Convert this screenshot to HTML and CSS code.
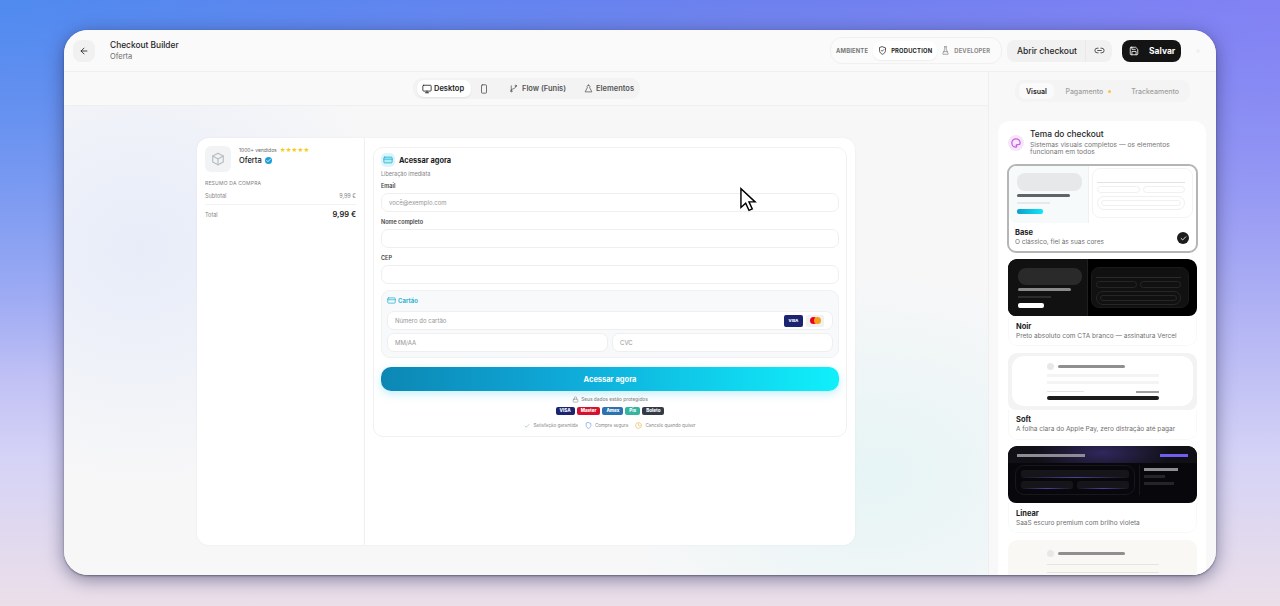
FILE: index.html
```html
<!DOCTYPE html>
<html lang="pt-BR">
<head>
    <meta charset="UTF-8">
    <meta name="viewport" content="width=device-width, initial-scale=1.0">
    <title>Checkout Builder</title>
    <link rel="stylesheet" href="styles.css">
</head>
<body>
    <div class="window">
        <header class="topbar">
            <div class="topbar-left">
                <button class="back-btn">
                    <svg width="10" height="10" viewBox="0 0 24 24" class="ico"><path d="M19 12H5M12 19l-7-7 7-7"/></svg>
                </button>
                <div class="title-block">
                    <div class="app-title">Checkout Builder</div>
                    <div class="app-sub">Oferta</div>
                </div>
            </div>
            <div class="topbar-right">
                <div class="env-switch">
                    <span class="env-label">AMBIENTE</span>
                    <span class="env-opt env-active">
                        <svg width="9" height="9" viewBox="0 0 24 24" class="ico"><path d="M12 2l8 3v7c0 5-3.500 8-8 10-4.500-2-8-5-8-10V5z"/><path d="M9 12l2 2 4-4"/></svg>
                        PRODUCTION
                    </span>
                    <span class="env-opt env-dev">
                        <svg width="9" height="9" viewBox="0 0 24 24" class="ico"><path d="M9 2h6M10 2v7l-5 11a1 1 0 0 0 1 2h12a1 1 0 0 0 1-2L14 9V2M7 15h10"/></svg>
                        DEVELOPER
                    </span>
                </div>
                <div class="open-group">
                    <span class="open-main">Abrir checkout</span>
                    <span class="open-link">
                        <svg width="11" height="11" viewBox="0 0 24 24" class="ico"><path d="M9 17H7A5 5 0 0 1 7 7h2M15 7h2a5 5 0 0 1 0 10h-2M8 12h8"/></svg>
                    </span>
                </div>
                <button class="save-btn">
                    <svg width="10" height="10" viewBox="0 0 24 24" class="ico"><path d="M5 3h11l5 5v11a2 2 0 0 1-2 2H5a2 2 0 0 1-2-2V5a2 2 0 0 1 2-2z"/><path d="M7 3v5h8M7 21v-8h10v8"/></svg>
                    Salvar
                </button>
                <span class="faint-dot"></span>
            </div>
        </header>

        <div class="workspace">
            <main class="stage">
                <div class="toolbar">
                    <div class="view-tabs">
                        <span class="view-tab view-active">
                            <svg width="10" height="10" viewBox="0 0 24 24" class="ico"><rect x="2" y="3" width="20" height="14" rx="2"/><path d="M8 21h8M12 17v4"/></svg>
                            Desktop
                        </span>
                        <span class="view-tab view-icon">
                            <svg width="10" height="10" viewBox="0 0 24 24" class="ico"><rect x="6" y="2" width="12" height="20" rx="2"/></svg>
                        </span>
                        <span class="view-tab view-flow">
                            <svg width="9" height="9" viewBox="0 0 24 24" class="ico"><circle cx="6" cy="19" r="2"/><circle cx="18" cy="5" r="2"/><path d="M6 17V5M18 7c0 5-6 5-12 8"/></svg>
                            Flow (Funis)
                        </span>
                        <span class="view-tab view-last">
                            <svg width="9" height="9" viewBox="0 0 24 24" class="ico"><path d="M12 3a4 4 0 0 1 3 6.500L21 21H3l6-11.500A4 4 0 0 1 12 3z"/></svg>
                            Elementos
                        </span>
                    </div>
                </div>

                <div class="canvas">
                    <div class="preview">
                        <aside class="summary">
                            <div class="product">
                                <div class="product-thumb">
                                    <svg width="14" height="14" viewBox="0 0 24 24" class="ico"><path d="M12 2l9 5v10l-9 5-9-5V7z"/><path d="M3 7l9 5 9-5M12 12v10"/></svg>
                                </div>
                                <div class="product-info">
                                    <div class="sold-row"><span>1000+ vendidos</span><span class="stars">★★★★★</span></div>
                                    <div class="product-name">Oferta <span class="verified"><svg width="7" height="7" viewBox="0 0 24 24" class="ico ico-white"><path d="M6 12l4 4 8-8"/></svg></span></div>
                                </div>
                            </div>
                            <div class="summary-head">RESUMO DA COMPRA</div>
                            <div class="summary-row summary-sub"><span>Subtotal</span><span>9,99 €</span></div>
                            <div class="summary-row summary-total"><span>Total</span><strong>9,99 €</strong></div>
                        </aside>
                        <section class="form-col">
                            <div class="form-card">
                                <div class="form-title-row">
                                    <span class="form-icon">
                                        <svg width="10" height="10" viewBox="0 0 24 24" class="ico ico-cyan"><rect x="2" y="5" width="20" height="14" rx="2"/><path d="M2 10h20"/></svg>
                                    </span>
                                    <span class="form-title">Acessar agora</span>
                                </div>
                                <div class="form-sub">Liberação imediata</div>

                                <label class="field-label">Email</label>
                                <div class="input">você@exemplo.com</div>
                                <label class="field-label">Nome completo</label>
                                <div class="input"></div>
                                <label class="field-label">CEP</label>
                                <div class="input"></div>

                                <div class="card-box">
                                    <div class="card-head">
                                        <svg width="9" height="9" viewBox="0 0 24 24" class="ico ico-cyan"><rect x="2" y="5" width="20" height="14" rx="2"/><path d="M2 10h20"/></svg>
                                        Cartão
                                    </div>
                                    <div class="input input-card">
                                        <span>Número do cartão</span>
                                        <span class="card-brands">
                                            <span class="brand-visa">VISA</span>
                                            <span class="brand-master"><i class="mc-red"></i><i class="mc-orange"></i></span>
                                        </span>
                                    </div>
                                    <div class="card-split">
                                        <div class="input">MM/AA</div>
                                        <div class="input">CVC</div>
                                    </div>
                                </div>

                                <button class="cta">Acessar agora</button>

                                <div class="secure-note">
                                    <svg width="7" height="7" viewBox="0 0 24 24" class="ico"><rect x="4" y="11" width="16" height="10" rx="2"/><path d="M8 11V7a4 4 0 0 1 8 0v4"/></svg>
                                    Seus dados estão protegidos
                                </div>
                                <div class="pay-badges">
                                    <span class="pay pay-visa">VISA</span>
                                    <span class="pay pay-master">Master</span>
                                    <span class="pay pay-amex">Amex</span>
                                    <span class="pay pay-pix">Pix</span>
                                    <span class="pay pay-boleto">Boleto</span>
                                </div>
                                <div class="trust-row">
                                    <span><svg width="6" height="6" viewBox="0 0 24 24" class="ico ico-green"><path d="M4 12l5 5L20 6"/></svg>Satisfação garantida</span>
                                    <span><svg width="7" height="7" viewBox="0 0 24 24" class="ico ico-blue"><path d="M12 2l8 3v7c0 5-3.500 8-8 10-4.500-2-8-5-8-10V5z"/></svg>Compra segura</span>
                                    <span><svg width="7" height="7" viewBox="0 0 24 24" class="ico ico-amber"><circle cx="12" cy="12" r="10"/><path d="M12 6v6l4 2"/></svg>Cancele quando quiser</span>
                                </div>
                            </div>
                        </section>
                    </div>
                </div>
            </main>

            <aside class="sidebar">
                <div class="side-tabs-wrap">
                    <div class="side-tabs">
                        <span class="side-tab side-active">Visual</span>
                        <span class="side-tab side-pay">Pagamento <i class="side-dot"></i></span>
                        <span class="side-tab">Trackeamento</span>
                    </div>
                </div>
                <div class="theme-panel">
                    <div class="theme-head">
                        <span class="theme-icon">
                            <svg width="10" height="10" viewBox="0 0 24 24" class="ico ico-pink"><path d="M12 2a10 10 0 1 0 0 20c2 0 2-2 1-3s0-3 2-3h3c2 0 4-1 4-4 0-6-5-10-10-10z"/></svg>
                        </span>
                        <div>
                            <div class="theme-title">Tema do checkout</div>
                            <div class="theme-desc">Sistemas visuais completos — os elementos funcionam em todos</div>
                        </div>
                    </div>

                    <div class="theme-card theme-selected">
                        <div class="thumb thumb-base">
                            <div class="tb-left">
                                <div class="tb-block"></div>
                                <div class="tb-bar"></div>
                                <div class="tb-faint"></div>
                                <div class="tb-btn"></div>
                            </div>
                            <div class="tb-right">
                                <div class="tb-panel">
                                    <div class="tb-line"></div>
                                    <div class="tb-pair"><span></span><span></span></div>
                                    <div class="tb-box"><span></span></div>
                                </div>
                            </div>
                        </div>
                        <div class="theme-info">
                            <div class="theme-name">Base</div>
                            <div class="theme-text">O clássico, fiel às suas cores</div>
                            <span class="theme-check"><svg width="7" height="7" viewBox="0 0 24 24" class="ico ico-white"><path d="M4 12l5 5L20 6"/></svg></span>
                        </div>
                    </div>

                    <div class="theme-card">
                        <div class="thumb thumb-base thumb-noir">
                            <div class="tb-left">
                                <div class="tb-block"></div>
                                <div class="tb-bar"></div>
                                <div class="tb-faint"></div>
                                <div class="tb-btn"></div>
                            </div>
                            <div class="tb-right">
                                <div class="tb-panel">
                                    <div class="tb-line"></div>
                                    <div class="tb-pair"><span></span><span></span></div>
                                    <div class="tb-box"><span></span></div>
                                </div>
                            </div>
                        </div>
                        <div class="theme-info">
                            <div class="theme-name">Noir</div>
                            <div class="theme-text">Preto absoluto com CTA branco — assinatura Vercel</div>
                        </div>
                    </div>

                    <div class="theme-card">
                        <div class="thumb thumb-soft">
                            <div class="soft-sheet">
                                <div class="soft-head"><i></i><span></span></div>
                                <div class="soft-line"></div>
                                <div class="soft-line"></div>
                                <div class="soft-foot"><span></span><span></span></div>
                                <div class="soft-cta"></div>
                            </div>
                        </div>
                        <div class="theme-info">
                            <div class="theme-name">Soft</div>
                            <div class="theme-text">A folha clara do Apple Pay, zero distração até pagar</div>
                        </div>
                    </div>

                    <div class="theme-card">
                        <div class="thumb thumb-linear">
                            <div class="lin-top"><span></span><span></span></div>
                            <div class="lin-body">
                                <div class="lin-form">
                                    <div class="lin-input"></div>
                                    <div class="lin-pair"><span></span><span></span></div>
                                </div>
                                <div class="lin-side"><span></span><span></span><span></span></div>
                            </div>
                        </div>
                        <div class="theme-info">
                            <div class="theme-name">Linear</div>
                            <div class="theme-text">SaaS escuro premium com brilho violeta</div>
                        </div>
                    </div>

                    <div class="theme-card">
                        <div class="thumb thumb-soft thumb-warm">
                            <div class="soft-sheet">
                                <div class="soft-head"><i></i><span></span></div>
                                <div class="soft-line"></div>
                                <div class="soft-line"></div>
                            </div>
                        </div>
                    </div>
                </div>
            </aside>
        </div>

        <svg class="cursor" width="17" height="25" viewBox="0 0 18 25">
            <path d="M1 1v20l5-4.500 3.500 7.500 3.500-1.500-3.500-7.500H16z"/>
        </svg>
    </div>
</body>
</html>
```

FILE: styles.css
```css
* {
    box-sizing: border-box;
}

body {
    margin: 0;
    height: 606px;
    padding: 30px 64px 31px;
    overflow: hidden;
    font-family: "Inter", "Liberation Sans", sans-serif;
    color: #171717;
    background:
        radial-gradient(ellipse 760px 380px at 0% 0%, rgba(60, 145, 240, .6), transparent),
        radial-gradient(ellipse 500px 300px at 100% 0%, rgba(150, 130, 250, .5), transparent),
        linear-gradient(180deg, #6d80ee 0%, #aeb0f4 50%, #d4d2f6 75%, #ebdfe9 100%);
}

button {
    font-family: inherit;
    border: none;
}

.ico {
    fill: none;
    stroke: currentColor;
    stroke-width: 2;
    stroke-linecap: round;
    stroke-linejoin: round;
    flex-shrink: 0;
}

.ico-white { color: #fff; stroke-width: 3; }
.ico-cyan { color: #22b3d6; }
.ico-pink { color: #c65fe0; stroke-width: 3; }
.ico-green { color: #4fb58a; }
.ico-blue { color: #5a8fd0; }
.ico-amber { color: #e5b44a; }

.window {
    position: relative;
    width: 1152px;
    height: 545px;
    border-radius: 24px;
    overflow: hidden;
    background: #f7f7f7;
    box-shadow: 0 1px 2px rgba(40, 40, 70, .5), 0 4px 18px rgba(30, 30, 70, .5);
    display: flex;
    flex-direction: column;
}

/* top bar */
.topbar {
    height: 42px;
    flex-shrink: 0;
    display: flex;
    justify-content: space-between;
    align-items: center;
    padding: 0 13px 0 9px;
    background: #fafafa;
    border-bottom: 1px solid #efefef;
}

.topbar-left {
    display: flex;
    align-items: center;
    gap: 15px;
}

.back-btn {
    width: 22px;
    height: 22px;
    padding: 0;
    border-radius: 8px;
    background: #f1f1f1;
    color: #222;
    display: flex;
    align-items: center;
    justify-content: center;
}

.app-title {
    font-size: 8.400px;
    font-weight: 500;
    color: #262626;
    line-height: 12px;
}

.app-sub {
    font-size: 7.500px;
    color: #6b6b6b;
    line-height: 11px;
}

.topbar-right {
    display: flex;
    align-items: center;
}

.env-switch {
    width: 172px;
    height: 27px;
    display: flex;
    align-items: center;
    padding: 0 5px;
    border-radius: 12px;
    background: #fbfbfb;
    border: 1px solid #f0f0f0;
    margin-right: 5px;
}

.env-label {
    font-size: 5.800px;
    font-weight: 700;
    letter-spacing: .2px;
    color: #777;
    margin-right: 5px;
}

.env-opt {
    display: flex;
    align-items: center;
    gap: 4px;
    height: 19px;
    padding: 0 5px;
    font-size: 5.800px;
    font-weight: 700;
    letter-spacing: .2px;
    color: #8a8a8a;
    border-radius: 8px;
}

.env-dev {
    padding-left: 4px;
}

.env-active {
    background: #fff;
    color: #222;
    box-shadow: 0 1px 2px rgba(0, 0, 0, .06);
}

.open-group {
    display: flex;
    width: 105px;
    height: 22px;
    border-radius: 8px;
    background: #f1f1f1;
    margin-right: 10px;
    overflow: hidden;
}

.open-main {
    flex: 1;
    padding-left: 2px;
    font-size: 8.500px;
    font-weight: 500;
    line-height: 22px;
    text-align: center;
    color: #262626;
    border-right: 1px solid #e9e9e9;
}

.open-link {
    width: 26px;
    display: flex;
    align-items: center;
    justify-content: center;
    color: #444;
}

.save-btn {
    width: 59px;
    height: 22px;
    display: flex;
    align-items: center;
    gap: 10px;
    padding: 0 7px;
    border-radius: 8px;
    background: #141414;
    color: #fff;
    font-size: 8.500px;
    font-weight: 700;
}

.faint-dot {
    width: 4px;
    height: 4px;
    border-radius: 50%;
    background: #f1f1f1;
    margin: 0 3px 0 15px;
}

/* work area */
.workspace {
    flex: 1;
    min-height: 0;
    display: flex;
}

.stage {
    width: 924px;
    display: flex;
    flex-direction: column;
    background:
        radial-gradient(ellipse 260px 240px at 8% 35%, rgba(215, 225, 250, .5), transparent),
        radial-gradient(ellipse 260px 200px at 88% 80%, rgba(205, 240, 240, .4), transparent),
        #f7f7f8;
}

.toolbar {
    height: 34px;
    flex-shrink: 0;
    display: flex;
    align-items: center;
    justify-content: center;
    background: #f9f9f9;
    border-bottom: 1px solid #efefef;
    padding-left: 1px;
}

.view-tabs {
    width: 227px;
    height: 21px;
    display: flex;
    align-items: center;
    padding: 0 4px;
    gap: 2px;
    border-radius: 9px;
    background: #f3f3f3;
}

.view-tab {
    display: flex;
    flex-shrink: 0;
    align-items: center;
    gap: 3px;
    height: 17px;
    padding: 0 8px;
    font-size: 7.500px;
    font-weight: 600;
    color: #555;
    border-radius: 7px;
    white-space: nowrap;
}

.view-active {
    width: 54px;
    padding: 0 0 0 5px;
    gap: 2px;
    color: #222;
    background: #fff;
    box-shadow: 0 1px 2px rgba(0, 0, 0, .07);
}

.view-icon {
    padding: 0 6px;
}

.view-flow {
    padding-left: 12px;
    gap: 4px;
}

.view-last {
    padding-right: 4px;
}

.canvas {
    flex: 1;
    padding: 32px 0 0 133px;
}

.preview {
    width: 658px;
    height: 407px;
    display: flex;
    background: #fff;
    border-radius: 12px;
    overflow: hidden;
    box-shadow: 0 0 3px rgba(0, 0, 0, .05);
}

.summary {
    width: 168px;
    flex-shrink: 0;
    border-right: 1px solid #efefef;
    padding: 8px 8px;
}

.product {
    display: flex;
    gap: 8px;
}

.product-thumb {
    width: 26px;
    height: 26px;
    border-radius: 6px;
    background: #f2f3f4;
    color: #b8bdc2;
    display: flex;
    align-items: center;
    justify-content: center;
}

.sold-row {
    display: flex;
    gap: 3px;
    align-items: center;
    font-size: 5px;
    line-height: 8px;
    color: #666;
}

.stars {
    font-size: 6.500px;
    letter-spacing: .1px;
    color: #f5cc15;
    font-family: "DejaVu Sans", sans-serif;
}

.product-name {
    display: flex;
    align-items: center;
    gap: 3px;
    margin-top: 1px;
    font-size: 7.500px;
    font-weight: 500;
    line-height: 12px;
}

.verified {
    width: 7px;
    height: 7px;
    margin-top: -1px;
    border-radius: 50%;
    background: #1a9fdc;
    display: flex;
}

.summary-head {
    font-size: 5px;
    letter-spacing: .2px;
    color: #808080;
    margin-top: 8px;
}

.summary-row {
    display: flex;
    justify-content: space-between;
    align-items: center;
    font-size: 5.500px;
    color: #858585;
}

.summary-sub {
    margin-top: 7px;
    padding-bottom: 5px;
    border-bottom: 1px solid #f2f2f2;
}

.summary-total {
    margin-top: 5px;
}

.summary-total strong {
    font-size: 7.500px;
    font-weight: 600;
    color: #222;
}

.form-col {
    flex: 1;
    padding: 9px 8px;
}

.form-card {
    height: 290px;
    padding: 5px 7px;
    border: 1px solid #f1f1f1;
    border-radius: 10px;
}

.form-title-row {
    display: flex;
    align-items: center;
    gap: 4px;
}

.form-icon {
    width: 14px;
    height: 14px;
    border-radius: 5px;
    background: #dcf5fa;
    display: flex;
    align-items: center;
    justify-content: center;
}

.form-icon .ico {
    fill: #b5ecf5;
}

.form-title {
    font-size: 7.400px;
    font-weight: 700;
    color: #1c1c1c;
}

.form-sub {
    font-size: 5.500px;
    color: #858585;
    margin-top: 3px;
    line-height: 8px;
}

.field-label {
    display: block;
    font-size: 5.500px;
    font-weight: 600;
    color: #444;
    margin-top: 6px;
    line-height: 9px;
}

.form-sub + .field-label {
    margin-top: 4px;
}

.input {
    height: 19px;
    margin-top: 2px;
    padding: 0 7px;
    border: 1px solid #efefef;
    border-radius: 7px;
    background: #fff;
    font-size: 6px;
    line-height: 17px;
    color: #959595;
}

.card-box {
    margin-top: 6px;
    height: 68px;
    padding: 5px;
    border: 1px solid #f0f1f2;
    border-radius: 9px;
    background: #f8f9fa;
}

.card-head {
    display: flex;
    align-items: center;
    gap: 2px;
    font-size: 6px;
    font-weight: 700;
    color: #32b3d2;
    line-height: 9px;
}

.input-card {
    display: flex;
    align-items: center;
    justify-content: space-between;
    padding-right: 8px;
    margin-top: 6px;
}

.input-card > span:first-child {
    margin-top: -1px;
}

.card-brands {
    display: flex;
    gap: 3px;
}

.brand-visa {
    width: 19px;
    height: 12px;
    border-radius: 2px;
    background: #1b2470;
    color: #fff;
    font-size: 4px;
    font-weight: 800;
    line-height: 12px;
    text-align: center;
}

.brand-master {
    width: 18px;
    height: 12px;
    border-radius: 2px;
    background: #f1f1f1;
    display: flex;
    align-items: center;
    justify-content: center;
}

.mc-red,
.mc-orange {
    width: 7px;
    height: 7px;
    border-radius: 50%;
}

.mc-red { background: #eb001b; }
.mc-orange { background: #f79e1b; margin-left: -3px; }

.card-split {
    display: grid;
    grid-template-columns: 1fr 1fr;
    gap: 4px;
    margin-top: 3px;
}

.card-split .input {
    margin-top: 0;
}

.cta {
    display: block;
    width: 100%;
    height: 24px;
    margin-top: 9px;
    border-radius: 10px;
    background: linear-gradient(90deg, #0c87b4 0%, #0fa9d8 40%, #10f0fb 100%);
    color: #fff;
    font-size: 7.500px;
    font-weight: 700;
    box-shadow: 0 3px 8px rgba(20, 190, 230, .25);
}

.secure-note {
    display: flex;
    justify-content: center;
    align-items: center;
    gap: 2px;
    margin-top: 5px;
    font-size: 4.800px;
    font-weight: 500;
    color: #888;
    line-height: 7px;
}

.pay-badges {
    display: flex;
    justify-content: center;
    gap: 2px;
    margin-top: 4px;
}

.pay {
    height: 8px;
    padding: 0 4px;
    border-radius: 2px;
    color: #fff;
    font-size: 4.500px;
    font-weight: 800;
    line-height: 8px;
}

.pay-visa { background: #1b2470; }
.pay-master { background: #d6112e; }
.pay-amex { background: #2d72b0; }
.pay-pix { background: #35b5a0; }
.pay-boleto { background: #343a46; }

.trust-row {
    display: flex;
    justify-content: center;
    gap: 7px;
    margin-top: 7px;
    font-size: 4.600px;
    color: #888;
}

.trust-row span {
    display: flex;
    align-items: center;
    gap: 3px;
}

/* right side */
.sidebar {
    flex: 1;
    min-width: 0;
    overflow: hidden;
    background: #f8f8f8;
    border-left: 1px solid #efefef;
    padding: 0 10px 0 9px;
}

.side-tabs-wrap {
    height: 49px;
    padding: 8px 16px 0 17px;
}

.side-tabs {
    height: 22px;
    display: flex;
    align-items: center;
    gap: 4px;
    padding: 0 4px;
    border-radius: 9px;
    background: #f4f4f4;
}

.side-tab {
    height: 16px;
    padding: 0 7px;
    font-size: 7px;
    font-weight: 500;
    line-height: 17px;
    color: #a0a0a0;
    border-radius: 6px;
    white-space: nowrap;
}

.side-active {
    width: 36px;
    background: #fafafa;
    color: #262626;
    font-weight: 600;
}

.side-pay {
    padding-right: 9px;
}

.side-dot {
    display: inline-block;
    width: 3px;
    height: 3px;
    margin-left: 3px;
    border-radius: 50%;
    background: #f6c453;
    vertical-align: 1px;
}

.theme-panel {
    background: #fff;
    border-radius: 12px;
    padding: 7px 9px;
    height: 600px;
}

.theme-head {
    height: 29px;
    display: flex;
    gap: 6px;
    align-items: center;
    margin-bottom: 7px;
}

.theme-icon {
    width: 16px;
    height: 16px;
    flex-shrink: 0;
    margin-left: 1px;
    border-radius: 50%;
    background: #f6e6fa;
    display: flex;
    align-items: center;
    justify-content: center;
}

.theme-title {
    font-size: 8.400px;
    font-weight: 500;
    color: #262626;
    line-height: 11px;
}

.theme-desc {
    font-size: 6.700px;
    color: #777;
    line-height: 7px;
    margin-top: 2px;
}

.theme-card {
    position: relative;
    margin: 0 0 6.500px 1px;
    border-radius: 9px;
    overflow: hidden;
}

.theme-selected {
    margin: 0 -1px 6px 0;
    border: 2px solid #b5b5b5;
}

.thumb {
    height: 57px;
    border-radius: 8px;
    overflow: hidden;
}

.theme-info {
    position: relative;
    height: 30px;
    padding: 5.500px 7px 0;
    border: 1px solid #f8f8f8;
    border-top: none;
    border-radius: 0 0 9px 9px;
}

.theme-selected .theme-info {
    height: 28px;
    padding: 4.500px 6px 0;
    border: none;
}

.theme-name {
    font-size: 7.500px;
    font-weight: 700;
    color: #1c1c1c;
    line-height: 9px;
}

.theme-text {
    font-size: 6.500px;
    color: #6f6f6f;
    line-height: 10px;
}

.theme-check {
    position: absolute;
    right: 7px;
    top: 9px;
    width: 12px;
    height: 12px;
    border-radius: 50%;
    background: #1c1c1c;
    display: flex;
    align-items: center;
    justify-content: center;
}

/* split thumbnails */
.thumb-base {
    display: flex;
    background: #fff;
}

.tb-left {
    width: 80px;
    padding: 7px 5px 0 8px;
    background: #f6fafb;
    border-right: 1px solid #eef0f1;
}

.tb-block {
    width: 65px;
    height: 18px;
    border-radius: 8px;
    background: #e7e8ea;
}

.tb-bar {
    width: 53px;
    height: 3px;
    margin-top: 3px;
    background: #5f6468;
    border-radius: 2px;
}

.tb-faint {
    width: 33px;
    height: 2px;
    margin-top: 5px;
    background: #e6e8ea;
}

.tb-btn {
    width: 26px;
    height: 5px;
    margin-top: 5px;
    border-radius: 2px;
    background: linear-gradient(90deg, #0c9fcb, #10e6f8);
}

.tb-right {
    flex: 1;
    padding: 2px 3px;
}

.tb-panel {
    height: 50px;
    border: 1px solid #f3f3f3;
    border-radius: 8px;
    padding: 13px 7px 0 4px;
}

.tb-line {
    height: 1px;
    background: #e2e2e2;
}

.tb-pair {
    display: flex;
    gap: 3px;
    margin-top: 3px;
}

.tb-pair span {
    flex: 1;
    height: 7px;
    border: 1px solid #f0f0f0;
    border-radius: 4px;
}

.tb-box {
    height: 14px;
    margin-top: 3px;
    padding: 3px;
    border: 1px solid #f0f0f0;
    border-radius: 7px;
}

.tb-box span {
    display: block;
    height: 6px;
    border: 1px solid #f0f0f0;
    border-radius: 3px;
}

.thumb-noir {
    background: #000;
}

.thumb-noir .tb-left {
    width: 80px;
    padding: 9px 5px 0 10px;
    background: #111;
    border-right-color: #1f1f1f;
}

.thumb-noir .tb-block { background: #2a2a2a; height: 17px; width: 64px; }
.thumb-noir .tb-bar { background: #8a8a8a; }
.thumb-noir .tb-faint { background: #2c2c2c; }
.thumb-noir .tb-btn { background: #fff; }
.thumb-noir .tb-right { padding: 8px 8px 0 3px; }
.thumb-noir .tb-panel { height: 41px; padding-top: 9px; background: #111; border-color: #1a1a1a; }
.thumb-noir .tb-line { background: #2a2a2a; }
.thumb-noir .tb-pair span,
.thumb-noir .tb-box,
.thumb-noir .tb-box span { border-color: #262626; }

/* soft thumbnails */
.thumb-soft {
    padding: 3px 4px;
    background: #f3f3f3;
}

.soft-sheet {
    height: 50px;
    padding: 7px 34px 0 35px;
    border-radius: 12px;
    background: #fff;
}

.soft-head {
    display: flex;
    align-items: center;
    gap: 4px;
}

.soft-head i {
    width: 7px;
    height: 7px;
    border-radius: 50%;
    background: #e8e8e8;
}

.soft-head span {
    width: 67px;
    height: 3px;
    border-radius: 2px;
    background: #8f8f8f;
}

.soft-line {
    height: 3px;
    margin-top: 4px;
    background: #f4f4f4;
}

.soft-foot {
    display: flex;
    justify-content: space-between;
    margin-top: 7px;
}

.soft-foot span:first-child {
    width: 37px;
    height: 1px;
    background: #e4e4e4;
}

.soft-foot span:last-child {
    width: 23px;
    height: 2px;
    background: #a0a0a0;
}

.soft-cta {
    height: 4px;
    margin-top: 3px;
    border-radius: 2px;
    background: #1c1c1c;
}

.thumb-warm {
    background: #faf8f4;
}

.thumb-warm .soft-sheet {
    background: #faf8f4;
}

.thumb-warm .soft-line {
    background: #e6e4df;
    height: 1px;
    margin-top: 7px;
}

/* linear thumbnail */
.thumb-linear {
    background: #08080c;
}

.lin-top {
    height: 17px;
    display: flex;
    justify-content: space-between;
    padding: 8px 9px 0;
    background: radial-gradient(ellipse 70px 22px at 50% 40%, rgba(70, 55, 140, .6), transparent), #101016;
}

.lin-top span:first-child {
    width: 68px;
    height: 3px;
    background: #8d8d96;
}

.lin-top span:last-child {
    width: 28px;
    height: 3px;
    background: #6f5ef0;
}

.lin-body {
    display: flex;
    padding: 2px 9px 0 7px;
}

.lin-form {
    width: 120px;
    height: 30px;
    flex-shrink: 0;
    padding: 4px 5px;
    border: 1px solid #17171d;
    border-radius: 9px;
}

.lin-input {
    height: 8px;
    border-radius: 3px;
    background: linear-gradient(90deg, transparent, #4a44a0, transparent) bottom / 100% 1px no-repeat, #15151a;
}

.lin-pair {
    display: flex;
    gap: 4px;
    margin-top: 3px;
}

.lin-pair span {
    flex: 1;
    height: 8px;
    border-radius: 3px;
    background: linear-gradient(90deg, transparent, #4a44a0, transparent) bottom / 100% 1px no-repeat, #15151a;
}

.lin-side {
    flex: 1;
    padding: 3px 0 0 4px;
    border-left: 1px solid #16161c;
    margin-left: 4px;
}

.lin-side span {
    display: block;
    height: 3px;
    margin-bottom: 4px;
    background: #24242b;
    width: 21px;
}

.lin-side span:first-child {
    background: #8d8d92;
    width: 34px;
}

.lin-side span:last-child {
    width: 30px;
}

/* mouse pointer over the screenshot */
.cursor {
    position: absolute;
    left: 676px;
    top: 157px;
    fill: #fff;
    stroke: #000;
    stroke-width: 1.500;
}
```
